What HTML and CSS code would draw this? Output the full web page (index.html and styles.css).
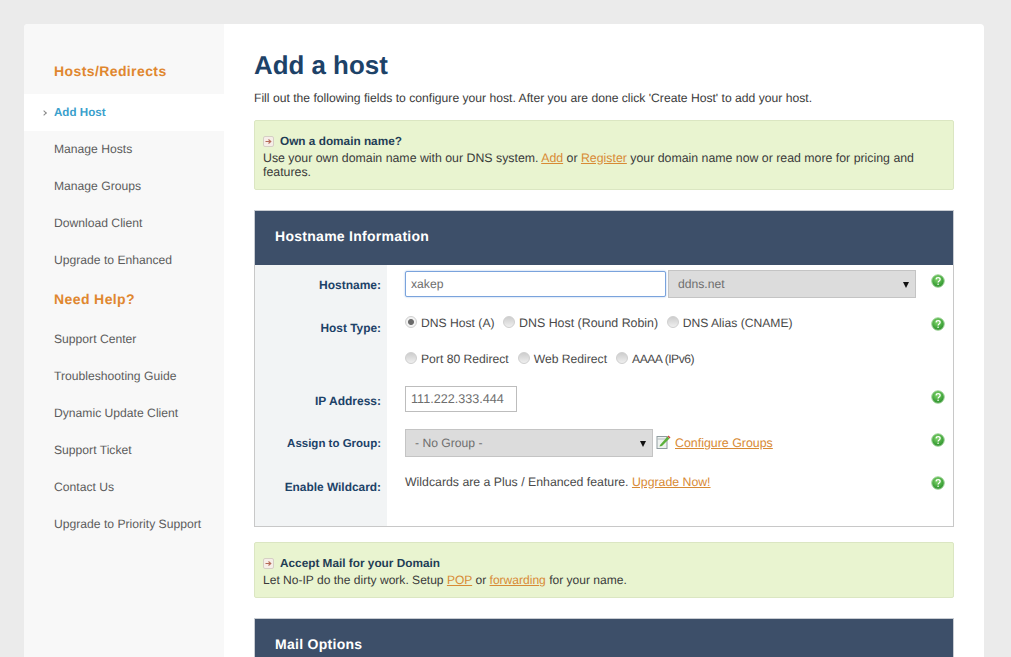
FILE: index.html
```html
<!DOCTYPE html>
<html lang="en">
<head>
<meta charset="utf-8">
<title>Add a host</title>
<link rel="stylesheet" href="styles.css">
</head>
<body>
<svg class="defs" width="0" height="0" aria-hidden="true">
  <defs>
    <radialGradient id="greenBall" cx="45%" cy="35%" r="70%">
      <stop offset="0" stop-color="#86d870"/>
      <stop offset="0.6" stop-color="#45a83e"/>
      <stop offset="1" stop-color="#2a8a2c"/>
    </radialGradient>
    <symbol id="help" viewBox="0 0 14 14">
      <circle cx="7" cy="7" r="6.3" fill="url(#greenBall)" stroke="#a9d8a2" stroke-width="1"/>
      <path d="M5 5.4C5.1 4.3 6 3.7 7.1 3.7c1.200 0 2 .7 2 1.700 0 1.500-2 1.500-2 3" fill="none" stroke="#fff" stroke-width="1.300"/>
      <circle cx="7.100" cy="10.300" r="0.800" fill="#fff"/>
    </symbol>
    <symbol id="arrowbox" viewBox="0 0 11 11">
      <rect x="0.500" y="0.500" width="10" height="10" rx="1.500" fill="#f6eee8" stroke="#d5cfc4"/>
      <path d="M2.500 5.500H7M5.500 3.500L7.800 5.500L5.500 7.500" fill="none" stroke="#b56a58" stroke-width="1.100"/>
    </symbol>
  </defs>
</svg>
<div class="card">
  <aside class="sidebar">
    <h3 class="side-head side-head-first">Hosts/Redirects</h3>
    <ul class="side-list">
      <li class="side-item active"><a href="#">Add Host</a></li>
      <li class="side-item"><a href="#">Manage Hosts</a></li>
      <li class="side-item"><a href="#">Manage Groups</a></li>
      <li class="side-item"><a href="#">Download Client</a></li>
      <li class="side-item"><a href="#">Upgrade to Enhanced</a></li>
    </ul>
    <h3 class="side-head side-head-second">Need Help?</h3>
    <ul class="side-list">
      <li class="side-item"><a href="#">Support Center</a></li>
      <li class="side-item"><a href="#">Troubleshooting Guide</a></li>
      <li class="side-item"><a href="#">Dynamic Update Client</a></li>
      <li class="side-item"><a href="#">Support Ticket</a></li>
      <li class="side-item"><a href="#">Contact Us</a></li>
      <li class="side-item"><a href="#">Upgrade to Priority Support</a></li>
    </ul>
  </aside>
  <main class="main">
    <h1 class="title">Add a host</h1>
    <p class="intro">Fill out the following fields to configure your host. After you are done click 'Create Host' to add your host.</p>

    <section class="notice notice-domain">
      <h4 class="notice-head"><svg class="arrow-ico"><use href="#arrowbox"/></svg>Own a domain name?</h4>
      <p class="notice-text">Use your own domain name with our DNS system. <a href="#">Add</a> or <a href="#">Register</a> your domain name now or read more for pricing and features.</p>
    </section>

    <h2 class="band">Hostname Information</h2>
    <form class="form">
      <div class="lab lab-r1">Hostname:</div>
      <div class="field f-r1">
        <input class="text text-host" type="text" value="xakep">
        <span class="select select-domain">ddns.net<i class="caret"></i></span>
      </div>
      <div class="hint"><svg class="help-ico"><use href="#help"/></svg></div>

      <div class="lab lab-r2">Host Type:</div>
      <div class="field f-r2">
        <div class="radios radios-a">
          <label class="radio"><i class="dot on"></i>DNS Host (A)</label>
          <label class="radio radio-wide"><i class="dot"></i>DNS Host (Round Robin)</label>
          <label class="radio"><i class="dot"></i>DNS Alias (CNAME)</label>
        </div>
        <div class="radios radios-b">
          <label class="radio"><i class="dot"></i>Port 80 Redirect</label>
          <label class="radio"><i class="dot"></i>Web Redirect</label>
          <label class="radio radio-tight"><i class="dot"></i>AAAA (IPv6)</label>
        </div>
      </div>
      <div class="hint"><svg class="help-ico"><use href="#help"/></svg></div>

      <div class="lab lab-r3">IP Address:</div>
      <div class="field f-r3"><input class="text text-ip" type="text" value="111.222.333.444"></div>
      <div class="hint"><svg class="help-ico"><use href="#help"/></svg></div>

      <div class="lab lab-r4">Assign to Group:</div>
      <div class="field f-r4">
        <span class="select select-group">- No Group -<i class="caret"></i></span>
        <svg class="edit-ico" viewBox="0 0 16 16">
          <rect x="2" y="2.500" width="10" height="12" fill="#eef2f0" stroke="#8f9ca0"/>
          <path d="M2 5H12" stroke="#b5bec0"/>
          <path d="M5 11L12.500 2.500L14.500 4.500L7 12L4.500 12.500Z" fill="#5cb13c"/>
          <path d="M12.500 2.500L13.500 1.500L15.500 3.500L14.500 4.500Z" fill="#c9473f"/>
        </svg>
        <a class="link-config" href="#">Configure Groups</a>
      </div>
      <div class="hint"><svg class="help-ico"><use href="#help"/></svg></div>

      <div class="lab lab-r5">Enable Wildcard:</div>
      <div class="field f-r5">Wildcards are a Plus / Enhanced feature. <a href="#">Upgrade Now!</a></div>
      <div class="hint"><svg class="help-ico"><use href="#help"/></svg></div>
    </form>

    <section class="notice notice-mail">
      <h4 class="notice-head"><svg class="arrow-ico"><use href="#arrowbox"/></svg>Accept Mail for your Domain</h4>
      <p class="notice-text">Let No-IP do the dirty work. Setup <a href="#">POP</a> or <a href="#">forwarding</a> for your name.</p>
    </section>

    <h2 class="band band-mail">Mail Options</h2>
  </main>
</div>
</body>
</html>
```

FILE: styles.css
```css
* { box-sizing: border-box; }
html, body { height: 100%; }
body {
  margin: 0;
  height: 657px;
  overflow: hidden;
  padding: 24px 27px 0 24px;
  background: #ebebeb;
  font-family: "Liberation Sans", Arial, sans-serif;
  font-size: 12.15px;
  color: #4a4a4a;
  text-rendering: geometricPrecision;
}
.defs { position: absolute; }
a { color: #d88a35; }

.card {
  display: flex;
  width: 960px;
  height: 660px;
  background: #fff;
  border-radius: 4px 4px 0 0;
  overflow: hidden;
}

/* sidebar */
.sidebar { width: 200px; flex: none; background: #f8f8f8; }
.side-head {
  margin: 0;
  padding-left: 30px;
  font-size: 14px;
  line-height: 18px;
  font-weight: 700;
  color: #e0872f;
  letter-spacing: 0.4px;
}
.side-head-first { padding-top: 38px; padding-bottom: 14px; }
.side-head-second { padding-top: 11px; padding-bottom: 13px; }
.side-list { margin: 0; padding: 0; list-style: none; }
.side-item { height: 37px; line-height: 37px; padding-left: 30px; position: relative; }
.side-item a { color: #5c5c5c; text-decoration: none; }
.side-item.active { background: #fff; }
.side-item.active a { color: #3aa0cc; font-weight: 700; font-size: 11.6px; }
.side-item.active::before {
  content: "";
  position: absolute;
  left: 18px;
  top: 17px;
  width: 3px;
  height: 3px;
  border-top: 1px solid #888;
  border-right: 1px solid #888;
  transform: rotate(45deg);
}

/* main */
.main { width: 700px; margin-left: 30px; flex: none; }
.title {
  margin: 0;
  padding-top: 25px;
  font-size: 25.9px;
  line-height: 34px;
  font-weight: 700;
  color: #1d4268;
}
.intro { margin: 7px 0 0; line-height: 16px; color: #3a3a3a; }

.notice {
  background: #e9f4d0;
  border: 1px solid #dbe6c2;
  border-radius: 2px;
  padding: 13px 8px 0;
}
.notice-domain { height: 70px; margin-top: 14px; }
.notice-mail { height: 56px; margin-top: 15px; }
.notice-head {
  display: flex;
  align-items: center;
  margin: 0;
  font-size: 11.8px;
  line-height: 15px;
  font-weight: 700;
  color: #1f3d55;
}
.arrow-ico { width: 11px; height: 11px; margin-right: 6px; }
.notice-text { margin: 2px 0 0; line-height: 14px; color: #3a3a3a; }
.notice-domain .notice-text { font-size: 12.34px; }
.notice-mail .notice-text { font-size: 12.05px; }

.band {
  margin: 20px 0 0;
  height: 55px;
  padding-left: 20px;
  background: #3d4f69;
  border: 1px solid #c8ccd2;
  border-bottom: 0;
  color: #fff;
  font-size: 14px;
  font-weight: 700;
  line-height: 50px;
  letter-spacing: 0.28px;
}

/* form */
.form {
  display: grid;
  grid-template-columns: 132px 1fr 22px;
  grid-template-rows: 43px 73px 43px 43px 59px;
  height: 262px;
  border: 1px solid #c8c8c8;
  border-top: 0;
  background: #fff;
}
.lab {
  background: #f2f4f5;
  padding: 13px 6px 0 0;
  text-align: right;
  font-weight: 700;
  font-size: 11.9px;
  line-height: 15px;
  color: #1d4268;
}
.lab-r1, .lab-r3 { font-size: 12px; }
.lab-r4 { font-size: 11.5px; }
.field { padding-left: 18px; }
.hint { padding-top: 9px; }
.help-ico { display: block; width: 14px; height: 14px; }

.f-r1 { display: flex; padding-top: 6px; gap: 2px; }
.f-r2 { padding-top: 8px; }
.f-r3 { padding-top: 5px; }
.f-r4 { padding-top: 5px; display: flex; align-items: flex-start; }
.f-r5 { padding-top: 8px; line-height: 15px; font-size: 12.3px; }

.text {
  display: block;
  height: 26px;
  padding: 0 5px;
  border: 1px solid #bdbdbd;
  background: #fff;
  font: 12.15px "Liberation Sans", Arial, sans-serif;
  text-rendering: geometricPrecision;
  color: #6e6e6e;
}
.text-host { width: 261px; border-color: #7aa3dc; box-shadow: 0 0 2px #9cbce6; border-radius: 2px; }
.text-ip { width: 112px; font-size: 12.6px; }

.select {
  position: relative;
  display: block;
  height: 28px;
  border: 1px solid #c4c4c4;
  background: #dcdcdc;
  color: #6e6e6e;
  line-height: 26px;
  padding-left: 9px;
}
.select-domain { width: 248px; margin-top: -1px; }
.select-group { width: 248px; }
.caret {
  position: absolute;
  right: 6px;
  top: 11px;
  border-left: 3.500px solid transparent;
  border-right: 3.500px solid transparent;
  border-top: 6px solid #111;
}
.edit-ico { width: 16px; height: 16px; margin: 5px 0 0 2px; flex: none; }
.link-config { margin: 7px 0 0 4px; line-height: 15px; font-size: 12.4px; }

.radios { display: flex; line-height: 14px; gap: 9px; }
.radios-a { gap: 8.5px; }
.radios-b { margin-top: 22px; }
.radio { display: flex; align-items: center; }
.radio-wide { font-size: 12.4px; }
.radio-tight { letter-spacing: -0.5px; }
.dot {
  display: block;
  width: 12px;
  height: 12px;
  margin: -3px 4px 0 0;
  border: 1px solid #cfcfcf;
  border-radius: 50%;
  background: linear-gradient(#cdcdcd, #efefef);
}
.dot.on { background: radial-gradient(circle, #6a6a6a 0 2.500px, #f2f2f2 3.500px); }
```
